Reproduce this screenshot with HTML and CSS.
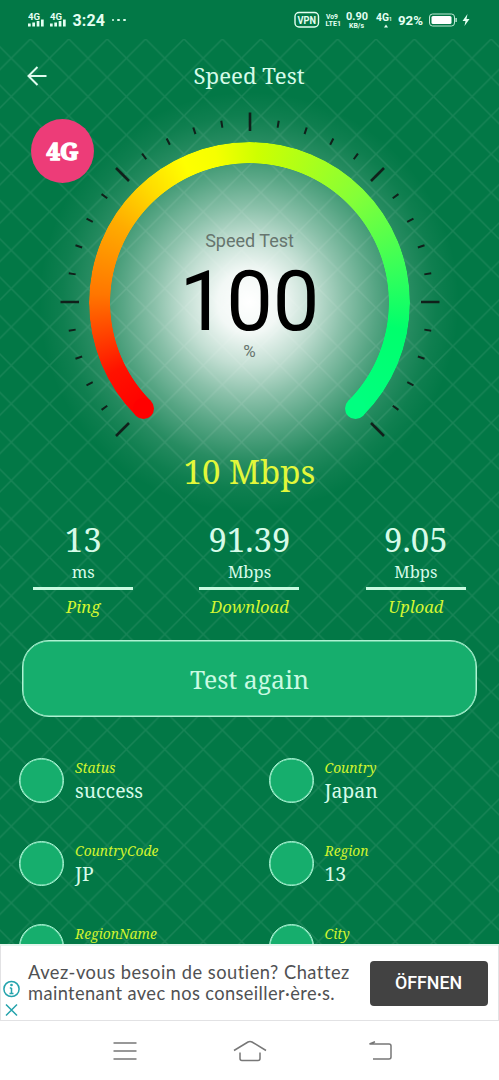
FILE: index.html
```html
<!DOCTYPE html>
<html lang="en">
<head>
<meta charset="utf-8">
<title>Speed Test</title>
<link rel="stylesheet" href="styles.css">
</head>
<body>
<div class="screen">
  <main class="app">
    <svg class="lattice" width="499" height="905" aria-hidden="true">
      <defs>
        <pattern id="grid" width="38.4" height="38.4" patternUnits="userSpaceOnUse" x="30.4" y="0">
          <path d="M-1 -1L39.4 39.4M39.4 -1L-1 39.4" stroke="#fff" stroke-opacity=".085" stroke-width="1.5"/>
        </pattern>
      </defs>
      <rect width="499" height="905" fill="url(#grid)"/>
    </svg>

    <div class="status">
      <svg class="status-left" width="45" height="18" fill="#e4fff2">
        <g class="tiny"><text x="0" y="7.5" textLength="12" lengthAdjust="spacingAndGlyphs">4G</text><text x="22" y="7.5" textLength="12" lengthAdjust="spacingAndGlyphs">4G</text></g>
        <path d="M0 11.5h2.7v3H0zM4.3 10.5H7v4H4.3zM8.7 9h2.7v5.500H8.700zM13 7.500h2.700v7H13zM22 11.500h2.700v3H22zM26.300 10.500H29v4h-2.700zM30.700 9h2.700v5.500h-2.700zM35 7.500h2.700v7H35z"/>
      </svg>
      <span class="clock">3:24</span>
      <span class="more"><i></i><i></i><i></i></span>
      <span class="spacer"></span>
      <svg class="status-right" width="180" height="20" fill="#e4fff2">
        <rect x="1" y="2.500" width="23.500" height="14.500" rx="4" fill="none" stroke="#e4fff2" stroke-width="1.400"/>
        <text x="3.500" y="14" font-size="11" textLength="18.500" lengthAdjust="spacingAndGlyphs">VPN</text>
        <text x="32" y="9" font-size="7.500" textLength="12" lengthAdjust="spacingAndGlyphs">Vo9</text>
        <text x="31.500" y="16" font-size="7.500" textLength="15.500" lengthAdjust="spacingAndGlyphs">LTE1</text>
        <text x="52" y="10" font-size="10.500" textLength="22" lengthAdjust="spacingAndGlyphs">0.90</text>
        <text x="55" y="17.500" font-size="7" textLength="15" lengthAdjust="spacingAndGlyphs">KB/s</text>
        <text x="82" y="11" font-size="10.500" textLength="13" lengthAdjust="spacingAndGlyphs">4G</text>
        <text x="95" y="11" font-size="5">1</text>
        <path d="M92 14.500l2 3h-4z"/>
        <text x="104" y="15" font-size="13" textLength="25" lengthAdjust="spacingAndGlyphs">92%</text>
        <rect x="135.500" y="4" width="25" height="12" rx="3" fill="none" stroke="#bfe9d4"/>
        <rect x="137.500" y="6" width="20" height="8" rx="1.500" fill="#fff"/>
        <path d="M161.500 8h1.200v4h-1.200zM173.500 4l-5 7h3l-1 5 5-7h-3z"/>
      </svg>
    </div>

    <header class="header">
      <svg class="back" width="20" height="20" fill="none" stroke="#dffbee" stroke-width="2"><path d="M19.500 10H1.500M10.500 1L1.500 10l9 9"/></svg>
      <h1 class="title">Speed Test</h1>
    </header>

    <section class="gauge">
      <div class="glow"></div>
      <div class="ring"></div>
      <i class="cap cap-start"></i><i class="cap cap-end"></i>
      <svg class="ticks" width="400" height="400" viewBox="-200 -200 400 400">
        <g fill="none" stroke="#10201a">
          <path class="minor" pathLength="30" d="M-127.280 127.280A180 180 0 1 1 127.280 127.280"/>
          <path stroke-width="2.600" d="M-189.500 0H-171M171 0H189.500M0 -189.500V-171M-134 -134L-121 -121M134 -134L121 -121M-134 134L-121 121M134 134L121 121"/>
        </g>
      </svg>
      <div class="reading">
        <span class="reading-label">Speed Test</span>
        <span class="reading-value">100</span>
        <span class="reading-unit">%</span>
      </div>
      <div class="badge">4G</div>
    </section>

    <p class="speed">10 Mbps</p>

    <section class="stats">
      <div class="stat"><b class="num">13</b><span class="unit">ms</span><em>Ping</em></div>
      <div class="stat"><b class="num">91.39</b><span class="unit">Mbps</span><em>Download</em></div>
      <div class="stat"><b class="num">9.05</b><span class="unit">Mbps</span><em>Upload</em></div>
    </section>

    <button class="again">Test again</button>

    <section class="details">
      <div class="item"><i class="dot"></i><div><em>Status</em><span>success</span></div></div>
      <div class="item"><i class="dot"></i><div><em>Country</em><span>Japan</span></div></div>
      <div class="item"><i class="dot"></i><div><em>CountryCode</em><span>JP</span></div></div>
      <div class="item"><i class="dot"></i><div><em>Region</em><span>13</span></div></div>
      <div class="item"><i class="dot"></i><div><em>RegionName</em></div></div>
      <div class="item"><i class="dot"></i><div><em>City</em></div></div>
    </section>
  </main>

  <aside class="ad">
    <svg class="ad-icons" width="20" height="38" fill="none" stroke="#24a3ac" stroke-width="1.500">
      <circle cx="10.500" cy="9" r="7.600"/><path d="M10.500 8v5.500M8.800 8h1.700M8.500 13.500h4M5 24.500l11 11M16 24.500l-11 11"/><circle cx="10.500" cy="5" r=".6"/>
    </svg>
    <p class="ad-text"><span class="l1">Avez-vous besoin de soutien? Chattez</span><br><span class="l2">maintenant avec nos conseiller·ère·s.</span></p>
    <button class="open">ÖFFNEN</button>
  </aside>

  <nav class="nav">
    <svg width="24" height="20" fill="none" stroke="#777" stroke-width="1.500"><path d="M.5 2h23M.5 10h23M.5 18h23"/></svg>
    <svg class="home" width="34" height="22" fill="none" stroke="#777" stroke-width="1.500"><path d="M1 10.500L15 2q2-1 4 0l14 8.500M7 12.500v6q0 2 2 2h16q2 0 2-2v-6"/></svg>
    <svg width="24" height="20" fill="none" stroke="#777" stroke-width="1.500"><path d="M7 .8L1.500 3H21q2 0 2 2v11q0 2-2 2H5"/></svg>
  </nav>
</div>
</body>
</html>
```
FILE: styles.css
```css
* { box-sizing: border-box; }
body { margin: 0; }
.screen {
  width: 499px; height: 1080px; overflow: hidden;
  display: flex; flex-direction: column; background: #fff;
  font-family: "Noto Serif", "DejaVu Serif Condensed", "DejaVu Serif", serif;
  font-stretch: condensed;
}
.app {
  position: relative; height: 944px; overflow: hidden;
  background: #027846; color: #d6fbe9;
  display: flex; flex-direction: column; flex: none;
}
.app > * { position: relative; flex: none; }
.app > .lattice { position: absolute; left: 0; top: 39px; }
.status, .reading, .open { font-stretch: normal; }
.status {
  height: 40px; padding: 0 25px 0 27.5px; display: flex; align-items: center;
  font-family: Roboto, sans-serif; font-weight: 700; color: #e4fff2; z-index: 1;
}
.status-left { margin-top: 2px; }
.tiny { font-size: 8.5px; }
.clock { font-size: 16px; letter-spacing: .1px; width: 34px; }
.more { display: flex; gap: 3.2px; margin-left: 5px; }
.more i { width: 2.8px; height: 2.8px; border-radius: 50%; background: #dcfdec; }
.spacer { flex: 1; }
.header { height: 74px; display: flex; align-items: center; padding-left: 27px; z-index: 1; }
.back { margin-top: -2px; }
.title { font-size: 22.2px; font-weight: 400; margin: -3px 0 0 146.5px; line-height: 74px; }
.gauge { height: 336px; width: 499px; z-index: 0; }
.glow {
  position: absolute; left: 39px; top: -22px; width: 420px; height: 420px; border-radius: 50%;
  background: radial-gradient(circle closest-side, #fff 0, rgba(255,255,255,.95) 15%, rgba(255,255,255,.77) 30%, rgba(255,255,255,.54) 45%, rgba(255,255,255,.34) 60%, rgba(255,255,255,.15) 76%, rgba(255,255,255,.05) 89%, transparent);
}
.ring {
  position: absolute; left: 89px; top: 28px; width: 321px; height: 321px; border-radius: 50%;
  background: conic-gradient(from 225deg, #f00 0, #ff1200 18deg, #ff7600 48deg, #ffac00 76deg, #ffdc00 94deg, #ff0 110deg, #f6ff00 122deg, #ceff00 138deg, #84ff38 180deg, #30ff5c 215deg, #00ff6c 235deg, #00ff80 270deg, transparent 270deg);
  -webkit-mask: radial-gradient(circle, transparent 139px, #000 139.7px);
  mask: radial-gradient(circle, transparent 139px, #000 139.7px);
}
.cap { position: absolute; width: 21px; height: 21px; border-radius: 50%; top: 284px; }
.cap-start { left: 133px; background: #f00; }
.cap-end { left: 344.5px; background: #00ff80; }
.ticks { position: absolute; left: 49.5px; top: -12px; }
.minor { stroke-width: 7px; stroke-dasharray: .072 .928; stroke-dashoffset: .036; }
.reading {
  position: relative; padding-top: 117px; display: flex; flex-direction: column;
  align-items: center; color: #000; font-family: Roboto, sans-serif;
}
.reading-label { font-size: 18px; line-height: 20px; color: #66756e; }
.reading-value { font-size: 83px; line-height: 78px; margin-top: 12px; }
.reading-unit { font-size: 17px; line-height: 20px; color: #66756e; }
.badge {
  position: absolute; left: 31px; top: 5px; width: 63px; height: 64px; border-radius: 50%;
  background: #ed3c78; color: #fff; text-align: center; line-height: 63px;
  font-size: 24px; font-weight: 700; -webkit-text-stroke: 1.5px #fff;
}
.speed { margin: 0; height: 44px; line-height: 44px; font-size: 33px; text-align: center; color: #e2f83a; }
.stats { display: grid; grid-template-columns: repeat(3, 1fr); padding-top: 26px; height: 146px; }
.stat { display: flex; flex-direction: column; align-items: center; }
.num { font-size: 33px; font-weight: 400; line-height: 40px; }
.unit { width: 100px; height: 30px; border-bottom: 3px solid #c8fae0; line-height: 24px; text-align: center; font-size: 16.5px; }
.stat em { color: #d4f632; font-size: 16.5px; line-height: 24px; margin-top: 5px; }
.again {
  margin: 0 22px; height: 77px; border: 1.5px solid #adf2d2; border-radius: 27px;
  background: #16ae6d; color: #c9fae2; font: inherit; font-size: 24.8px; padding: 0;
  box-shadow: inset 0 0 0 .5px #adf2d2;
}
.details { display: grid; grid-template-columns: 249.5px 1fr; grid-auto-rows: 83px; padding: 41px 0 0 19px; }
.item { display: flex; gap: 11px; }
.dot { width: 45px; height: 45px; border: 1.5px solid #a8f3d2; border-radius: 50%; background: #16ae6d; box-shadow: inset 0 0 0 .5px #a8f3d2; }
.item em { display: block; color: #d0f32e; font-size: 13.8px; line-height: 20px; }
.item span { display: block; font-size: 19.4px; line-height: 25px; }
.ad {
  height: 77px; flex: none; display: flex; align-items: center;
  border: 1px solid #e2e2e4; border-top: 2px solid #e4f6ed; padding-right: 10px;
}
.ad-icons { margin: 32px 7px 0 0; flex: none; }
.ad-text { margin: -1px 0 0; width: 342px; white-space: nowrap; font: 18.3px/21px Lato, sans-serif; color: #505153; font-variant-ligatures: none; }
.l1 { letter-spacing: .5px; }
.l2 { letter-spacing: .38px; }
.open {
  width: 118px; height: 45px; border: 0; border-radius: 4px; background: #424242; color: #fff;
  font: 500 17.8px Roboto, sans-serif; flex: none; padding: 0 1px 1px 0;
}
.nav { height: 59px; display: flex; align-items: center; padding-left: 113px; }
.home { margin: 0 101px 0 96px; }
```
